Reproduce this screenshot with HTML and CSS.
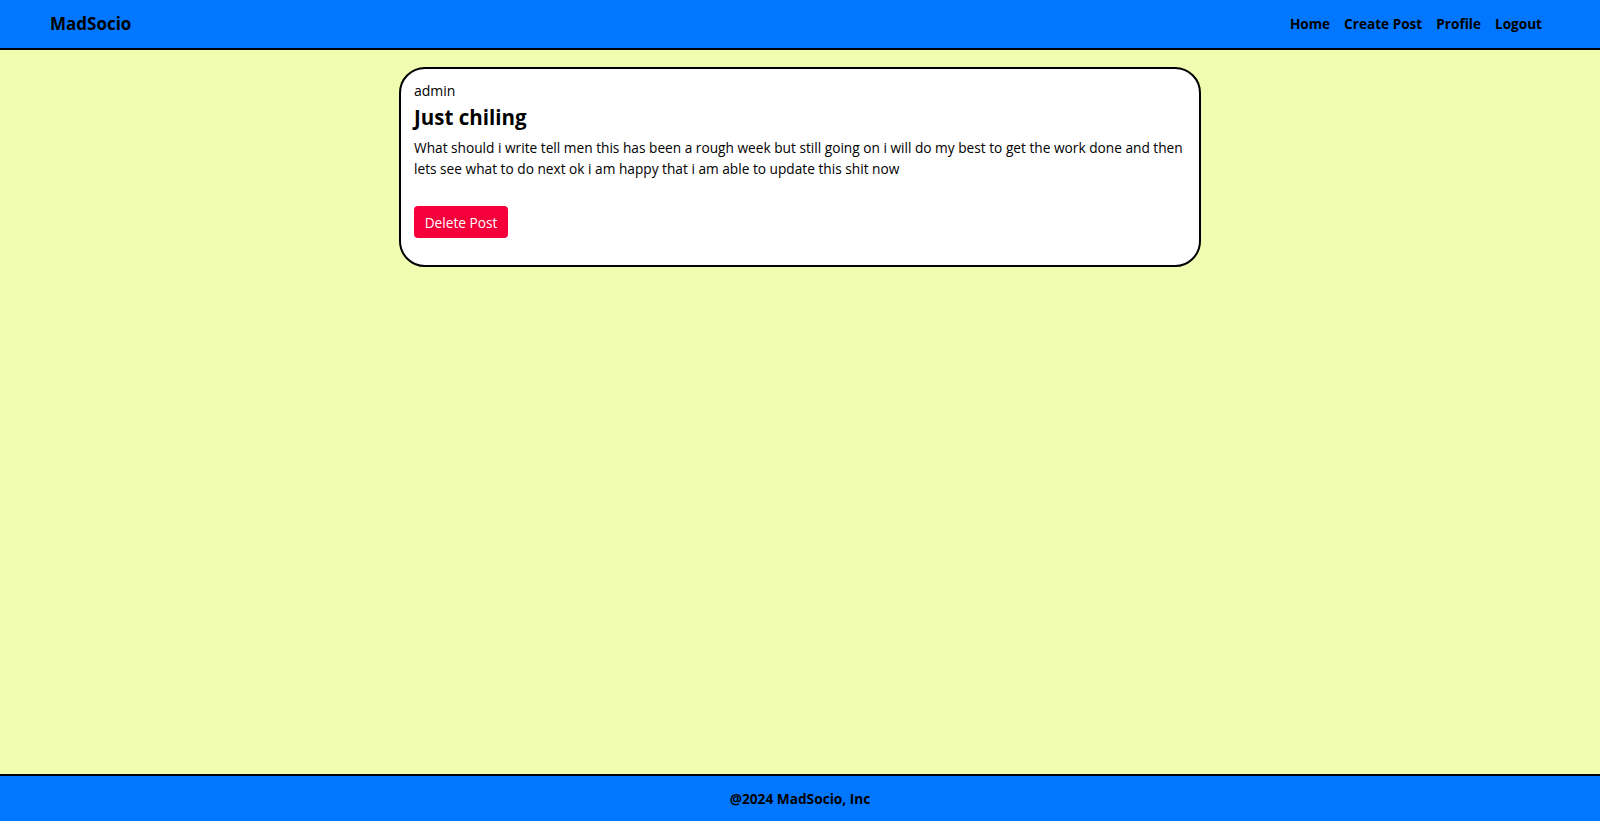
FILE: index.html
```html
<!DOCTYPE html>
<html lang="en">
<head>
<meta charset="utf-8">
<title>MadSocio</title>
<link rel="stylesheet" href="styles.css">
</head>
<body>
<div class="page">
  <header class="topbar">
    <div class="brand">MadSocio</div>
    <nav class="nav">
      <a href="#">Home</a>
      <a href="#">Create Post</a>
      <a href="#">Profile</a>
      <a href="#">Logout</a>
    </nav>
  </header>
  <main class="content">
    <article class="post">
      <div class="author">admin</div>
      <h2 class="title">Just chiling</h2>
      <p class="body">What should i write tell men this has been a rough week but still going on i will do my best to get the work done and then lets see what to do next ok i am happy that i am able to update this shit now</p>
      <button class="delete">Delete Post</button>
    </article>
  </main>
  <footer class="footer">@2024 MadSocio, Inc</footer>
</div>
</body>
</html>
```
FILE: styles.css
```css
* { box-sizing: border-box; }
html, body { margin: 0; padding: 0; }
body {
  font-family: "Open Sans", "Liberation Sans", sans-serif;
  background: #f0fdb0;
  color: #000;
}
.page {
  min-height: 100vh;
  display: flex;
  flex-direction: column;
}
.topbar {
  height: 50px;
  background: #0077fe;
  border-bottom: 2px solid #000;
  display: flex;
  align-items: center;
  justify-content: space-between;
  padding: 0 58px 1px 50px;
}
.brand {
  font-weight: 700;
  font-size: 17px;
}
.nav {
  display: flex;
  gap: 14px;
}
.nav a {
  color: #000;
  text-decoration: none;
  font-weight: 700;
  font-size: 13.6px;
}
.content {
  flex: 1;
  display: flex;
  justify-content: center;
  align-items: flex-start;
  padding-top: 17px;
}
.post {
  width: 802px;
  background: #fff;
  border: 2px solid #000;
  border-radius: 26px;
  padding: 11px 7px 27px 13px;
}
.author {
  font-size: 14px;
  line-height: 21px;
}
.title {
  margin: 1px 0 5px;
  font-size: 20.5px;
  line-height: 30px;
  font-weight: 700;
}
.body {
  margin: 0 0 27px;
  font-size: 13.7px;
  line-height: 21px;
}
.delete {
  display: block;
  height: 32px;
  width: 94px;
  border: none;
  border-radius: 4px;
  background: #f5003a;
  color: #fff;
  font-family: inherit;
  font-size: 13.7px;
  padding: 0;
}
.footer {
  height: 47px;
  background: #0077fe;
  border-top: 2px solid #000;
  display: flex;
  align-items: center;
  justify-content: center;
  font-weight: 700;
  font-size: 13.7px;
}
```
